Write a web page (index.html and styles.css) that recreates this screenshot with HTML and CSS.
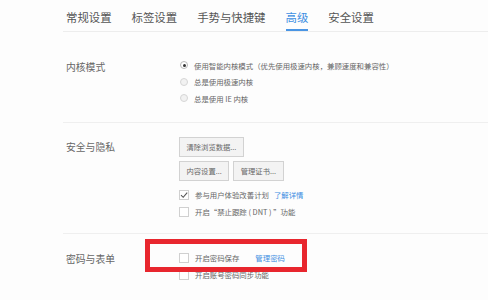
FILE: index.html
```html
<!DOCTYPE html>
<html lang="zh-CN">
<head>
<meta charset="utf-8">
<link rel="stylesheet" href="styles.css">
</head>
<body>
<div class="page">
  <div class="tabs">
    <div class="tab">常规设置</div>
    <div class="tab">标签设置</div>
    <div class="tab">手势与快捷键</div>
    <div class="tab active">高级</div>
    <div class="tab">安全设置</div>
  </div>

  <div class="section s1">
    <div class="label">内核模式</div>
    <div class="content">
      <div class="row"><span class="radio on"></span>使用智能内核模式（优先使用极速内核，兼顾速度和兼容性）</div>
      <div class="row"><span class="radio"></span>总是使用极速内核</div>
      <div class="row"><span class="radio"></span>总是使用 IE 内核</div>
    </div>
  </div>

  <div class="section s2">
    <div class="label">安全与隐私</div>
    <div class="content">
      <div class="btns"><span class="btn">清除浏览数据...</span></div>
      <div class="btns"><span class="btn">内容设置...</span><span class="btn">管理证书...</span></div>
      <div class="checks">
        <div class="row"><span class="check on"><svg viewBox="0 0 10 10" width="10" height="10"><path d="M2 5.2 L4.2 7.3 L8.2 2.6" fill="none" stroke="#555" stroke-width="1.1"/></svg></span>参与用户体验改善计划<a class="link near">了解详情</a></div>
        <div class="row"><span class="check"></span>开启“禁止跟踪 ( DNT ) ”功能</div>
      </div>
    </div>
  </div>

  <div class="section s3">
    <div class="label">密码与表单</div>
    <div class="content">
      <div class="row"><span class="check"></span>开启密码保存<a class="link far">管理密码</a></div>
      <div class="row"><span class="check"></span>开启账号密码同步功能</div>
    </div>
    <div class="highlight"></div>
  </div>
</div>
</body>
</html>
```

FILE: styles.css
```css
html, body {
  margin: 0;
  padding: 0;
  background: #fdfdfd;
}
body {
  font-family: "Noto Sans CJK SC", "Noto Sans", sans-serif;
  color: #555;
  width: 488px;
  height: 300px;
  overflow: hidden;
}
.page {
  padding-left: 63px;
}
.tabs {
  display: flex;
  gap: 20px;
  padding-left: 3px;
  height: 32px;
  box-sizing: border-box;
  border-bottom: 1px solid #ededed;
}
.tab {
  font-size: 11.4px;
  line-height: 12px;
  padding-top: 11px;
  height: 31px;
  box-sizing: border-box;
  color: #555;
  white-space: nowrap;
}
.tab.active {
  color: #3d8fe2;
  border-bottom: 2px solid #4a95e4;
}
.section {
  display: flex;
  border-bottom: 1px solid #efefef;
  position: relative;
}
.s1 { padding: 25px 0 15.5px; }
.s2 { padding: 14px 0 13px; }
.s3 { padding: 15px 0 26px; border-bottom: none; }
.label {
  width: 113px;
  padding-left: 3px;
  font-size: 9.8px;
  line-height: 17px;
  margin-top: 2px;
  color: #666;
  flex: none;
}
.content {
  display: flex;
  flex-direction: column;
  font-size: 7.4px;
  color: #666;
}
.row {
  display: flex;
  align-items: center;
  height: 17px;
  white-space: nowrap;
}
.s1 .row { height: 16.5px; }
.radio {
  width: 8px;
  height: 8px;
  border: 1px solid #d6d6d6;
  border-radius: 50%;
  box-sizing: border-box;
  background: #f2f2f2;
  margin: 0 6px 0 1px;
  position: relative;
  flex: none;
}
.radio.on {
  border-color: #b8b8b8;
  background: #fff;
}
.radio.on::after {
  content: "";
  position: absolute;
  left: 1.5px;
  top: 1.5px;
  width: 3px;
  height: 3px;
  border-radius: 50%;
  background: #333;
}
.check {
  width: 10px;
  height: 10px;
  border: 1px solid #d0d0d0;
  box-sizing: border-box;
  background: #fff;
  margin-right: 6px;
  flex: none;
  display: flex;
  align-items: center;
  justify-content: center;
}
.check svg { display: block; flex: none; }
.link {
  color: #3d8fe2;
}
.link.near { margin-left: 5px; }
.link.far { margin-left: 16px; }
.btns {
  display: flex;
  gap: 4px;
  margin-bottom: 4px;
}
.btn {
  display: inline-block;
  height: 20px;
  line-height: 18px;
  padding: 0 6.5px;
  border: 1px solid #d2d2d2;
  box-sizing: border-box;
  background: #f3f3f3;
  color: #666;
  font-size: 7.3px;
  white-space: nowrap;
}
.checks {
  margin-top: 1px;
}
.highlight {
  position: absolute;
  left: 82px;
  top: 5px;
  width: 162px;
  height: 33px;
  border: 5px solid #e8262e;
  box-sizing: border-box;
}
```
